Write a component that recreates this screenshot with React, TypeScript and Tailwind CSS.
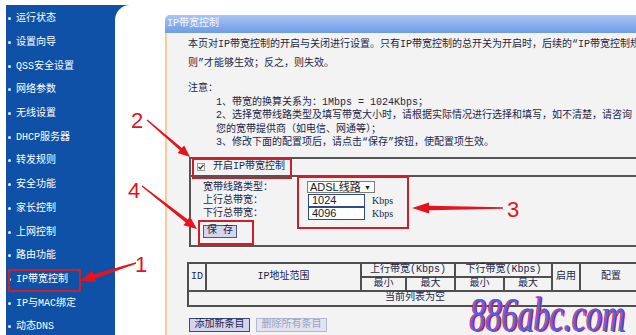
import React from "react";

const menu = [
  "运行状态",
  "设置向导",
  "QSS安全设置",
  "网络参数",
  "无线设置",
  "DHCP服务器",
  "转发规则",
  "安全功能",
  "家长控制",
  "上网控制",
  "路由功能",
  "IP带宽控制",
  "IP与MAC绑定",
  "动态DNS",
];

function arrowPts(
  x1: number,
  y1: number,
  x2: number,
  y2: number,
  tailW: number,
  shaftW: number,
  headLen: number,
  headW: number
) {
  const dx = x2 - x1;
  const dy = y2 - y1;
  const L = Math.hypot(dx, dy);
  const ux = dx / L;
  const uy = dy / L;
  const nx = -uy;
  const ny = ux;
  const bx = x2 - ux * headLen;
  const by = y2 - uy * headLen;
  const p = (x: number, y: number) => `${x.toFixed(1)},${y.toFixed(1)}`;
  return [
    p(x1 + (nx * tailW) / 2, y1 + (ny * tailW) / 2),
    p(bx + (nx * shaftW) / 2, by + (ny * shaftW) / 2),
    p(bx + (nx * headW) / 2, by + (ny * headW) / 2),
    p(x2, y2),
    p(bx - (nx * headW) / 2, by - (ny * headW) / 2),
    p(bx - (nx * shaftW) / 2, by - (ny * shaftW) / 2),
    p(x1 - (nx * tailW) / 2, y1 - (ny * tailW) / 2),
  ].join(" ");
}

const cell = "border-2 border-[#4f4f4f] p-0 font-normal align-middle";

export default function App() {
  return (
    <div className="relative w-[636px] h-[335px] overflow-hidden bg-white font-['Liberation_Mono','Noto_Sans_CJK_SC',monospace] text-[10px] text-[#1c2749]">
      <div className="h-full pt-[5px] pl-[6px]">
        <div className="flex h-full bg-[#0f51a6]">
          {/* Sidebar */}
          <nav className="w-[109px] shrink-0 pt-[2px]">
            {menu.map((m) => (
              <div key={m} className="h-[23.7px] flex items-center pl-[2px] text-white text-[10px] whitespace-nowrap">
                <span className="w-[3px] h-[3px] rounded-full bg-[#e8f0ff] mr-[5px]" />
                {m}
              </div>
            ))}
          </nav>

          {/* Main */}
          <main className="flex-1 min-w-0 bg-white rounded-tl-[15px] overflow-hidden pl-[50px] pt-[10px]">
            <div className="w-[520px] rounded-tl-[5px] overflow-hidden">
              <div className="h-[18px] bg-linear-to-b from-[#a9c6f3] to-[#6e9be4] pl-[2px] leading-[18px] text-[#f4f7ff] whitespace-nowrap">
                IP带宽控制
              </div>
              <div className="border-l-2 border-[#f0cf9e] bg-[#f3f3f3] pl-[21px] pt-[2px] pb-[10px]">
                <div className="leading-[19px] whitespace-nowrap">
                  <div>本页对IP带宽控制的开启与关闭进行设置。只有IP带宽控制的总开关为开启时，后续的“IP带宽控制规</div>
                  <div>则”才能够生效；反之，则失效。</div>
                </div>
                <div className="mt-[9px] leading-[13.5px] whitespace-nowrap">注意：</div>
                <div className="pl-[28px] leading-[13.5px] whitespace-nowrap">
                  <div>1、带宽的换算关系为：1Mbps = 1024Kbps；</div>
                  <div>2、选择宽带线路类型及填写带宽大小时，请根据实际情况进行选择和填写，如不清楚，请咨询</div>
                  <div>您的宽带提供商（如电信、网通等）；</div>
                  <div>3、修改下面的配置项后，请点击“保存”按钮，使配置项生效。</div>
                </div>

                {/* Fieldset */}
                <div className="ml-px mt-[7px] w-[480px] border-t-2 border-l-2 border-b-2 border-[#555555]">
                  <div className="h-[18px] flex items-center pl-[6px] border-b-2 border-[#555555]">
                    <span className="w-[8px] h-[8px] border border-[#9a9a9a] bg-[#f6f6f6] flex items-center justify-center mr-[8px]">
                      <svg width="6" height="6" viewBox="0 0 6 6">
                        <path d="M0.6 3 L2.3 4.8 L5.4 0.9" stroke="#333" strokeWidth="1.3" fill="none" />
                      </svg>
                    </span>
                    <span className="whitespace-nowrap">开启IP带宽控制</span>
                  </div>
                  <div className="pl-[12px] pt-[4px] pb-[7px]">
                    <div className="flex h-[13px] items-center">
                      <div className="w-[104px] whitespace-nowrap">宽带线路类型：</div>
                      <div className="w-[68px] h-[12px] bg-white border border-[#7d7d7d] flex items-center justify-between pl-[2px] pr-[3px] font-['Liberation_Sans','Noto_Sans_CJK_SC',sans-serif] text-[11px] leading-none text-[#202020]">
                        <span>ADSL线路</span>
                        <span className="text-[7px]">▼</span>
                      </div>
                    </div>
                    <div className="flex h-[13px] items-center">
                      <div className="w-[104px] whitespace-nowrap">上行总带宽：</div>
                      <div className="ml-px w-[57px] h-[13px] bg-white border border-[#2d4b8a] pl-[3px] flex items-center font-['Liberation_Sans',sans-serif] text-[11px] leading-none text-[#202020]">
                        1024
                      </div>
                      <div className="ml-[7px] font-['Liberation_Serif',serif] text-[10px]">Kbps</div>
                    </div>
                    <div className="flex h-[13px] items-center">
                      <div className="w-[104px] whitespace-nowrap">下行总带宽：</div>
                      <div className="ml-px w-[57px] h-[13px] bg-white border border-[#2d4b8a] pl-[3px] flex items-center font-['Liberation_Sans',sans-serif] text-[11px] leading-none text-[#202020]">
                        4096
                      </div>
                      <div className="ml-[7px] font-['Liberation_Serif',serif] text-[10px]">Kbps</div>
                    </div>
                    <div className="mt-[5px] w-[34px] h-[13px] bg-[#d5d6ee] border border-[#485887] flex items-center justify-center text-[10px] leading-none whitespace-nowrap">
                      保 存
                    </div>
                  </div>
                </div>

                {/* Table */}
                <table className="-ml-px mt-[15px] w-[454px] table-fixed border-collapse text-center leading-none">
                  <colgroup>
                    <col className="w-[18px]" />
                    <col className="w-[155px]" />
                    <col className="w-[45px]" />
                    <col className="w-[49px]" />
                    <col className="w-[49px]" />
                    <col className="w-[48px]" />
                    <col className="w-[28px]" />
                    <col className="w-[62px]" />
                  </colgroup>
                  <tbody>
                    <tr className="h-[14px]">
                      <td rowSpan={2} className={cell}>ID</td>
                      <td rowSpan={2} className={cell}>IP地址范围</td>
                      <td colSpan={2} className={cell + " whitespace-nowrap"}>上行带宽(Kbps)</td>
                      <td colSpan={2} className={cell + " whitespace-nowrap"}>下行带宽(Kbps)</td>
                      <td rowSpan={2} className={cell}>启用</td>
                      <td rowSpan={2} className={cell}>配置</td>
                    </tr>
                    <tr className="h-[14px]">
                      <td className={cell}>最小</td>
                      <td className={cell}>最大</td>
                      <td className={cell}>最小</td>
                      <td className={cell}>最大</td>
                    </tr>
                    <tr className="h-[15px]">
                      <td colSpan={8} className={cell}>当前列表为空</td>
                    </tr>
                  </tbody>
                </table>

                <div className="mt-[11px] ml-px flex gap-[6px]">
                  <div className="w-[61px] h-[14px] bg-[#d4d5ed] border border-[#3d4a78] flex items-center justify-center whitespace-nowrap">
                    添加新条目
                  </div>
                  <div className="w-[71px] h-[14px] bg-[#e3e4f0] border border-[#b3b7cf] text-[#9aa2c6] flex items-center justify-center whitespace-nowrap">
                    删除所有条目
                  </div>
                </div>
              </div>
            </div>
          </main>
        </div>
      </div>

      {/* Annotation overlays */}
      <div className="absolute left-[8px] top-[269px] w-[73px] h-[23px] border-2 border-[#cc1f2a]" />
      <div className="absolute left-[192px] top-[158px] w-[100px] h-[21px] border-2 border-[#cc1f2a]" />
      <div className="absolute left-[297px] top-[176px] w-[112px] h-[53px] border-2 border-[#cc1f2a]" />
      <div className="absolute left-[198px] top-[220px] w-[56px] h-[25px] border-2 border-[#cc1f2a]" />

      <svg className="absolute left-0 top-0" width="636" height="335" viewBox="0 0 636 335">
        <polygon points={arrowPts(136, 263, 80, 281, 1.5, 4.5, 15, 12)} fill="#e6131d" />
        <polygon points={arrowPts(147, 120, 190, 157, 1.2, 3, 12, 10)} fill="#e6131d" />
        <polygon points={arrowPts(142, 186, 197, 229, 1.2, 3.5, 13, 11)} fill="#e6131d" />
        <polygon points={arrowPts(503, 208, 412, 208, 1.5, 4.5, 17, 11)} fill="#e6131d" />
      </svg>

      <div className="absolute left-[131px] top-[110px] font-['Liberation_Sans',sans-serif] text-[22px] leading-[22px] text-[#e3121c]">2</div>
      <div className="absolute left-[128px] top-[180px] font-['Liberation_Sans',sans-serif] text-[22px] leading-[22px] text-[#e3121c]">4</div>
      <div className="absolute left-[135px] top-[254px] font-['Liberation_Sans',sans-serif] text-[22px] leading-[22px] text-[#e3121c]">1</div>
      <div className="absolute left-[507px] top-[199px] font-['Liberation_Sans',sans-serif] text-[22px] leading-[22px] text-[#e3121c]">3</div>

      <div className="absolute left-[470px] top-[290px] origin-top-left scale-y-150 font-['Liberation_Serif',serif] italic text-[32px] leading-[32px] text-[#4762f4] whitespace-nowrap [text-shadow:1px_1px_0_#e52630,-1px_0_0_#e52630]">
        886abc.com
      </div>
    </div>
  );
}
